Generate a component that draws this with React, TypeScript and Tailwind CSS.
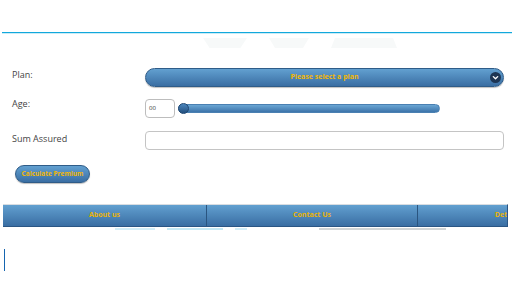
import React from 'react';

const blueBar = 'bg-gradient-to-b from-[#62a0d0] to-[#3a6ea3]';

const App: React.FC = () => {
  return (
    <div className="w-[512px] h-[299px] bg-white overflow-hidden font-['Open_Sans',sans-serif]">
      {/* header rule */}
      <div className="h-[32px]" />
      <div className="ml-[2px] h-[1px] bg-[#12a8dc]" />
      <div className="ml-[2px] h-[1px] bg-[#c9ecf7]" />
      <div className="flex h-[14px] pt-[4px] pl-[203px] gap-[22px]">
        <div className="w-[44px] h-[10px] bg-[#f7f9f9] [clip-path:polygon(0_0,100%_0,85%_100%,15%_100%)]" />
        <div className="w-[40px] h-[10px] bg-[#f7f9f9] [clip-path:polygon(0_0,100%_0,85%_100%,15%_100%)]" />
        <div className="w-[66px] h-[10px] bg-[#f7f9f9] [clip-path:polygon(6%_0,94%_0,100%_100%,0_100%)]" />
      </div>

      {/* form */}
      <div className="flex flex-col mt-[20px]">
        <div className="flex items-center h-[19px]">
          <div className="w-[145px] pl-[12px] text-[9px] text-[#444] -mt-[6px]">Plan:</div>
          <div className={`relative w-[359px] h-[19px] rounded-full border border-[#2f5c88] ${blueBar} flex items-center justify-center shadow-[0_1px_1px_rgba(0,0,0,0.25)]`}>
            <span className="text-[7px] font-bold text-[#f2b705]">Please select a plan</span>
            <div className="absolute right-[2px] top-[3px] w-[11px] h-[11px] rounded-full bg-[#1d3553] flex items-center justify-center">
              <svg width="7" height="7" viewBox="0 0 8 8">
                <path d="M1.5 3 L4 5.5 L6.5 3" stroke="white" strokeWidth="1.6" fill="none" strokeLinecap="round" strokeLinejoin="round" />
              </svg>
            </div>
          </div>
        </div>

        <div className="flex items-center h-[19px] mt-[12px]">
          <div className="w-[145px] pl-[12px] text-[9px] text-[#444] -mt-[10px]">Age:</div>
          <div className="w-[30px] h-[19px] rounded-[4px] border border-[#bdbdbd] flex items-center pl-[3px] text-[6px] text-[#333]">00</div>
          <div className="relative ml-[3px] w-[262px] h-[9px] rounded-full bg-gradient-to-b from-[#6aa6d4] to-[#3d74aa] border border-[#4a80b2]">
            <div className="absolute -left-[1px] -top-[2px] w-[11px] h-[11px] rounded-full bg-gradient-to-b from-[#4b86bd] to-[#24507f] border border-[#1f4670]" />
          </div>
        </div>

        <div className="flex items-center h-[19px] mt-[13px]">
          <div className="w-[145px] pl-[12px] text-[9px] text-[#444] -mt-[4px]">Sum Assured</div>
          <div className="w-[359px] h-[19px] rounded-[4px] border border-[#c4c4c4]" />
        </div>

        <div className="pl-[15px] mt-[8px]">
          <button className={`w-[75px] h-[18px] rounded-full border border-[#2f5c88] ${blueBar} text-[6.5px] font-bold text-[#f2b705] shadow-[0_1px_1px_rgba(0,0,0,0.25)]`}>
            Calculate Premium
          </button>
        </div>
      </div>

      {/* nav bar */}
      <div className="ml-[3px] mt-[21px] w-[505px] h-[23px] overflow-hidden border-t border-[#d8dde2] border-b border-b-[#2b5684] border-r border-r-[#2b5684]">
        <div className={`flex w-[620px] h-full ${blueBar}`}>
          <div className="w-[204px] flex items-center justify-center border-r border-[#2a5580] text-[7px] font-bold text-[#eab308]">About us</div>
          <div className="w-[211px] flex items-center justify-center border-r border-[#2a5580] text-[7px] font-bold text-[#eab308]">Contact Us</div>
          <div className="w-[178px] flex items-center justify-center text-[7px] font-bold text-[#eab308]">Details</div>
        </div>
      </div>
      <div className="flex h-[3px] mt-[1px] pl-[115px] gap-[12px]">
        <div className="w-[40px] h-[2px] bg-[#d3eef8]" />
        <div className="w-[56px] h-[2px] bg-[#c5e9f5]" />
        <div className="w-[12px] h-[2px] bg-[#d3eef8]" />
        <div className="ml-[60px] w-[127px] h-[2px] bg-[#d0d4d6]" />
      </div>

      {/* caret */}
      <div className="ml-[4px] mt-[18px] w-[1px] h-[22px] bg-[#1565b0]" />
    </div>
  );
};

export default App;
